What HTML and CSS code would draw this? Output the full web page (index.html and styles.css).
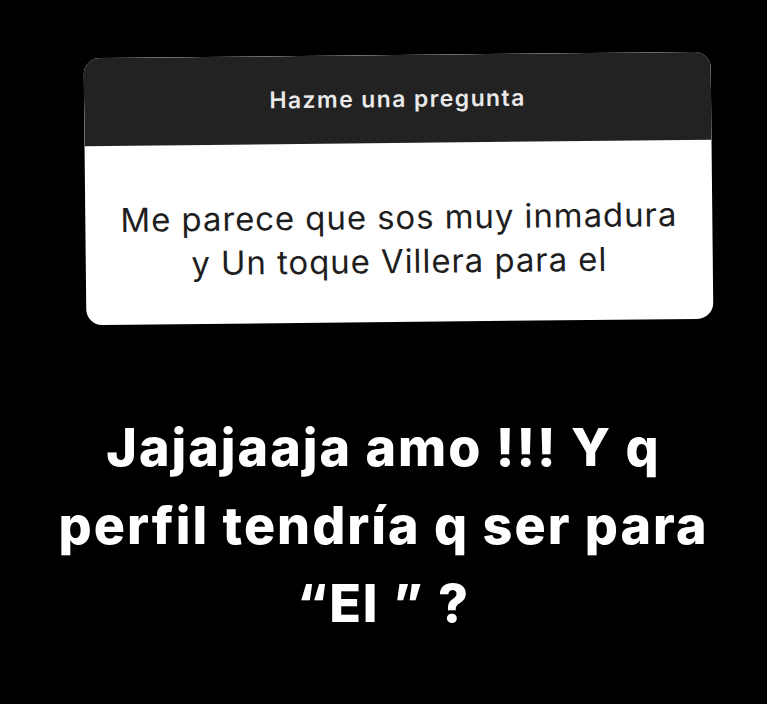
FILE: index.html
```html
<!DOCTYPE html>
<html lang="es">
<head>
<meta charset="utf-8">
<title>Hazme una pregunta</title>
<link rel="stylesheet" href="styles.css">
</head>
<body>
<main class="story">
  <section class="card">
    <header class="card-head">Hazme una pregunta</header>
    <div class="card-body">
      <p class="question">Me parece que sos muy inmadura<br>y Un toque Villera para el</p>
    </div>
  </section>
  <p class="answer">Jajajaaja amo !!! Y q<br>perfil tendría q ser para<br>“El ” ?</p>
</main>
</body>
</html>
```

FILE: styles.css
```css
html, body {
  margin: 0;
  padding: 0;
  background: #000;
}
body {
  width: 767px;
  height: 704px;
  overflow: hidden;
  font-family: Inter, "Noto Sans", "Liberation Sans", sans-serif;
}
.story {
  display: flex;
  flex-direction: column;
  padding-top: 55px;
}
.card {
  margin-left: 85px;
  width: 627px;
  border-radius: 16px;
  overflow: hidden;
  background: #fff;
  transform: rotate(-0.6deg);
}
.card-head {
  height: 88px;
  background: #222222;
  color: #e9e9e9;
  font-size: 23px;
  letter-spacing: 1.4px;
  font-weight: 600;
  display: flex;
  align-items: center;
  justify-content: center;
}
.card-body {
  padding: 52px 0 39px;
}
.question {
  margin: 0;
  text-align: center;
  color: #1e1e1e;
  font-size: 33px;
  letter-spacing: 0.9px;
  line-height: 44px;
  font-weight: 400;
}
.answer {
  margin: 87px 0 0;
  text-align: center;
  color: #fff;
  font-size: 52px;
  letter-spacing: 2px;
  line-height: 78px;
  font-weight: 800;
}
```
